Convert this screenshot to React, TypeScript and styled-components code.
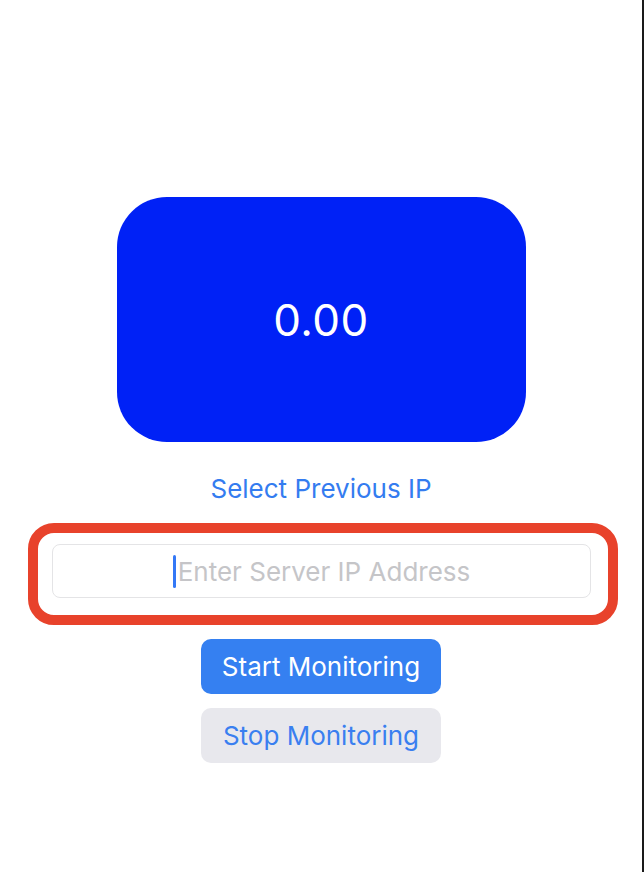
import * as React from 'react';
import styled, { createGlobalStyle } from 'styled-components';

const GlobalStyle = createGlobalStyle`
  html, body {
    margin: 0;
    padding: 0;
    background: #ffffff;
  }
  body {
    font-family: Inter, "Liberation Sans", Arial, sans-serif;
  }
`;

const Screen = styled.div`
  box-sizing: border-box;
  width: 644px;
  height: 872px;
  border-right: 2px solid #1a1a1a;
  display: flex;
  flex-direction: column;
  align-items: center;
  padding-top: 197px;
  overflow: hidden;
`;

const Readout = styled.div`
  width: 409px;
  height: 245px;
  border-radius: 50px;
  background: #0021f6;
  color: #ffffff;
  display: flex;
  align-items: center;
  justify-content: center;
  font-size: 44px;
  font-weight: 400;
  letter-spacing: 0.5px;
`;

const LinkButton = styled.button`
  margin-top: 31px;
  border: none;
  background: none;
  padding: 0;
  color: #347cf0;
  font-family: inherit;
  font-size: 26px;
  line-height: 32px;
  cursor: pointer;
`;

const Highlight = styled.div`
  box-sizing: border-box;
  margin: 18px 0 0 4px;
  width: 590px;
  border: 10px solid #e8422b;
  border-radius: 26px;
  padding: 11px 15px 17px 14px;
`;

const Field = styled.div`
  box-sizing: border-box;
  width: 539px;
  height: 54px;
  border: 1px solid #e4e4e6;
  border-radius: 8px;
  display: flex;
  align-items: center;
  justify-content: center;
  gap: 2px;
`;

const Caret = styled.span`
  width: 3px;
  height: 33px;
  border-radius: 2px;
  background: #3478f6;
`;

const Placeholder = styled.span`
  color: #c5c5c8;
  font-size: 26px;
`;

const Actions = styled.div`
  margin-top: 14px;
  display: flex;
  flex-direction: column;
  align-items: center;
  gap: 14px;
`;

const ActionButton = styled.button<{ $primary?: boolean }>`
  width: 240px;
  height: 55px;
  border: none;
  border-radius: 10px;
  font-family: inherit;
  font-size: 26px;
  background: ${p => (p.$primary ? '#3580f1' : '#e8e8ed')};
  color: ${p => (p.$primary ? '#ffffff' : '#3a7ff0')};
  cursor: pointer;
`;

const App = (): React.ReactElement => (
  <>
    <GlobalStyle />
    <Screen>
      <Readout>0.00</Readout>
      <LinkButton>Select Previous IP</LinkButton>
      <Highlight>
        <Field>
          <Caret />
          <Placeholder>Enter Server IP Address</Placeholder>
        </Field>
      </Highlight>
      <Actions>
        <ActionButton $primary>Start Monitoring</ActionButton>
        <ActionButton>Stop Monitoring</ActionButton>
      </Actions>
    </Screen>
  </>
);

export default App;
